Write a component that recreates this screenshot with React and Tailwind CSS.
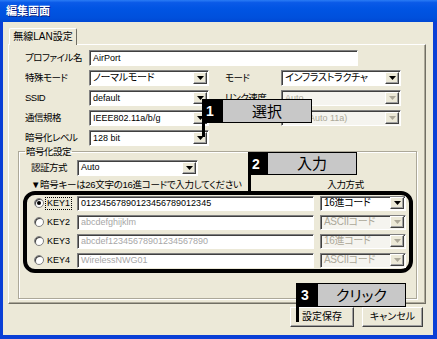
import React from "react";

// XP風の編集ダイアログ + 手順の注釈
function Arrow({ disabled }) {
    return (
        <svg width="7" height="4" viewBox="0 0 7 4">
            <path d="M0 0H7L3.5 4Z" fill={disabled ? "#aca899" : "#000"} />
        </svg>
    );
}

function Box({ className = "", children, muted = false, latin = false }) {
    return (
        <div className={`h-full flex items-center bg-white border border-t-[#808080] border-l-[#808080] border-b-white border-r-white shadow-[inset_1px_1px_0_#404040] pl-[3px] overflow-hidden whitespace-nowrap leading-none ${latin ? "text-[9px]" : "text-[10px]"} ${muted ? "text-[#a7a7a7]" : "text-black"} ${className}`}>
            {children}
        </div>
    );
}

function Combo({ className = "", children, disabled = false, latin = false }) {
    return (
        <div className={`h-full flex items-center border border-t-[#808080] border-l-[#808080] border-b-white border-r-white shadow-[inset_1px_1px_0_#404040] leading-none ${latin ? "text-[9px]" : "text-[10px] tracking-[-0.3px]"} ${disabled ? "bg-[#f5f4ef] text-[#aca899]" : "bg-white text-black"} ${className}`}>
            <span className="flex-1 pl-[3px] overflow-hidden whitespace-nowrap">{children}</span>
            <div className="h-[12px] w-[14px] mr-[1px] bg-[#ECE9D8] border border-t-white border-l-white border-b-[#404040] border-r-[#404040] shadow-[inset_-1px_-1px_0_#a0a0a0] flex items-center justify-center">
                <Arrow disabled={disabled} />
            </div>
        </div>
    );
}

function Radio({ on }) {
    return (
        <div className="w-[10px] h-[10px] rounded-full bg-white border border-[#808080] shadow-[inset_1px_1px_0_#404040] flex items-center justify-center">
            {on && <div className="w-[4px] h-[4px] rounded-full bg-black" />}
        </div>
    );
}

const keys = [
    { name: "KEY1", value: "01234567890123456789012345", mode: "16進コード", on: true },
    { name: "KEY2", value: "abcdefghijklm", mode: "ASCIIコード" },
    { name: "KEY3", value: "abcdef12345678901234567890", mode: "16進コード" },
    { name: "KEY4", value: "WirelessNWG01", mode: "ASCIIコード" },
];

const label = "text-[9.5px] tracking-[-0.5px] leading-none whitespace-nowrap";

export default function App() {
    return (
        <div className="relative w-[437px] h-[339px] flex flex-col bg-[#0a3fd6] font-['Liberation_Sans','Noto_Sans_CJK_JP',sans-serif] [font-feature-settings:'palt'] text-black overflow-hidden">
            {/* タイトルバー */}
            <div className="h-[22px] shrink-0 flex items-center pl-[6px] bg-[linear-gradient(to_bottom,#2a7cf5_0%,#0a5ae8_12%,#0054e3_40%,#0050dc_80%,#0048d4_100%)]">
                <span className="text-white font-bold text-[11px] leading-none [text-shadow:1px_1px_#0a1f80]">編集画面</span>
            </div>

            {/* 本体 */}
            <div className="flex-1 ml-[3px] mr-[4px] mb-[4px] bg-[#ECE9D8] flex flex-col">
                {/* タブ */}
                <div className="pt-[6px] pl-[6px] h-[23px] flex">
                    <div className="relative z-10 w-[68px] h-[17px] bg-[#ECE9D8] border border-b-0 border-t-white border-l-white border-r-[#716f64] rounded-t-[2px] flex items-center justify-center text-[10px] leading-none">
                        無線LAN設定
                    </div>
                </div>

                {/* タブパネル */}
                <div className="ml-[5px] w-[418px] h-[260px] -mt-[1px] bg-[#ECE9D8] border border-t-white border-l-white border-r-[#716f64] border-b-[#716f64] shadow-[inset_-1px_-1px_0_#aca899] pt-[5px] pl-[16px] flex flex-col">
                    <div className="flex flex-col gap-[4px]">
                        <div className="flex items-center h-[16px]">
                            <span className={`w-[64px] ${label}`}>プロファイル名</span>
                            <Box className="w-[269px]" latin>AirPort</Box>
                        </div>
                        <div className="flex items-center h-[16px]">
                            <span className={`w-[64px] ${label}`}>特殊モード</span>
                            <Combo className="w-[120px]">ノーマルモード</Combo>
                            <span className={`ml-[16px] w-[56px] ${label}`}>モード</span>
                            <Combo className="w-[120px]">インフラストラクチャ</Combo>
                        </div>
                        <div className="flex items-center h-[16px]">
                            <span className={`w-[64px] ${label}`}>SSID</span>
                            <Combo className="w-[120px]" latin>default</Combo>
                            <span className={`ml-[16px] w-[56px] ${label}`}>リンク速度</span>
                            <Combo className="w-[120px]" latin disabled>Auto</Combo>
                        </div>
                        <div className="flex items-center h-[16px]">
                            <span className={`w-[64px] ${label}`}>通信規格</span>
                            <Combo className="w-[120px]" latin>IEEE802.11a/b/g</Combo>
                            <span className="ml-[16px] w-[56px]" />
                            <Combo className="w-[120px]" latin disabled>Auto (Auto 11a)</Combo>
                        </div>
                        <div className="flex items-center h-[16px]">
                            <span className={`w-[64px] ${label}`}>暗号化レベル</span>
                            <Combo className="w-[120px]" latin>128 bit</Combo>
                        </div>
                    </div>

                    {/* 暗号化設定 */}
                    <fieldset className="mt-[1px] -ml-[7px] w-[399px] h-[152px] border border-[#aca899] shadow-[inset_1px_1px_0_#fff,1px_1px_0_#fff] px-[2px]">
                        <legend className={`ml-[4px] px-[1px] ${label} leading-[12px]`}>暗号化設定</legend>
                        <div className="pt-[3px] pl-[10px] flex items-center h-[19px]">
                            <span className={`w-[46px] ${label}`}>認証方式</span>
                            <Combo className="w-[121px]" latin>Auto</Combo>
                        </div>
                        <div className="mt-[4px] pl-[10px] h-[11px] flex items-center text-[9.5px] tracking-[-0.3px] leading-none whitespace-nowrap">
                            <span>▼暗号キーは26文字の16進コードで入力してください</span>
                            <span className="ml-auto mr-[50px]">入力方式</span>
                        </div>
                        <div className="ml-[2px] w-[390px] border-4 border-black rounded-[12px] py-[1px] flex flex-col gap-[4px]">
                            {keys.map((k) => (
                                <div key={k.name} className="flex items-center h-[15px] pl-[7px]">
                                    <Radio on={k.on} />
                                    <div className="ml-[2px] w-[31px] flex items-center">
                                        <span className={`text-[9px] leading-[11px] px-[1px] ${k.on ? "outline outline-1 outline-dotted outline-black" : ""}`}>{k.name}</span>
                                    </div>
                                    <Box className="w-[237px]" latin muted={!k.on}>{k.value}</Box>
                                    <Combo className="ml-[6px] w-[86px]" disabled={!k.on}>{k.mode}</Combo>
                                </div>
                            ))}
                        </div>
                    </fieldset>
                </div>

                {/* ボタン */}
                <div className="mt-[3px] flex justify-end gap-[8px] pr-[10px]">
                    <button className="w-[64px] h-[20px] bg-[#ECE9D8] border border-t-white border-l-white border-b-[#404040] border-r-[#404040] shadow-[inset_-1px_-1px_0_#a0a0a0] text-[10px] leading-none">
                        設定保存
                    </button>
                    <button className="w-[61px] h-[20px] bg-[#ECE9D8] border border-t-white border-l-white border-b-[#404040] border-r-[#404040] shadow-[inset_-1px_-1px_0_#a0a0a0] text-[10px] leading-none">
                        キャンセル
                    </button>
                </div>
            </div>

            {/* 注釈 1 */}
            <div className="absolute left-[202px] top-[99px] h-[24px] flex">
                <div className="w-[20px] bg-black text-white font-bold text-[14px] leading-none flex items-center pl-[4px]">1</div>
                <div className="w-[90px] bg-[#c8c8c8] border border-black flex items-center justify-center text-[15px] leading-none">選択</div>
            </div>
            <div className="absolute left-[202px] top-[122px] w-[3px] h-[15px] bg-black" />

            {/* 注釈 2 */}
            <div className="absolute left-[248px] top-[152px] h-[23px] flex">
                <div className="w-[19px] bg-black text-white font-bold text-[14px] leading-none flex items-center pl-[4px]">2</div>
                <div className="w-[90px] bg-[#c8c8c8] border border-black flex items-center justify-center text-[15px] leading-none">入力</div>
            </div>
            <div className="absolute left-[248px] top-[174px] w-[3px] h-[20px] bg-black" />

            {/* 注釈 3 */}
            <div className="absolute left-[296px] top-[283px] h-[24px] flex">
                <div className="w-[21px] bg-black text-white font-bold text-[14px] leading-none flex items-center pl-[5px]">3</div>
                <div className="w-[89px] bg-[#c8c8c8] border border-black flex items-center justify-center text-[15px] leading-none">クリック</div>
            </div>
            <div className="absolute left-[296px] top-[306px] w-[3px] h-[16px] bg-black" />
        </div>
    );
}
